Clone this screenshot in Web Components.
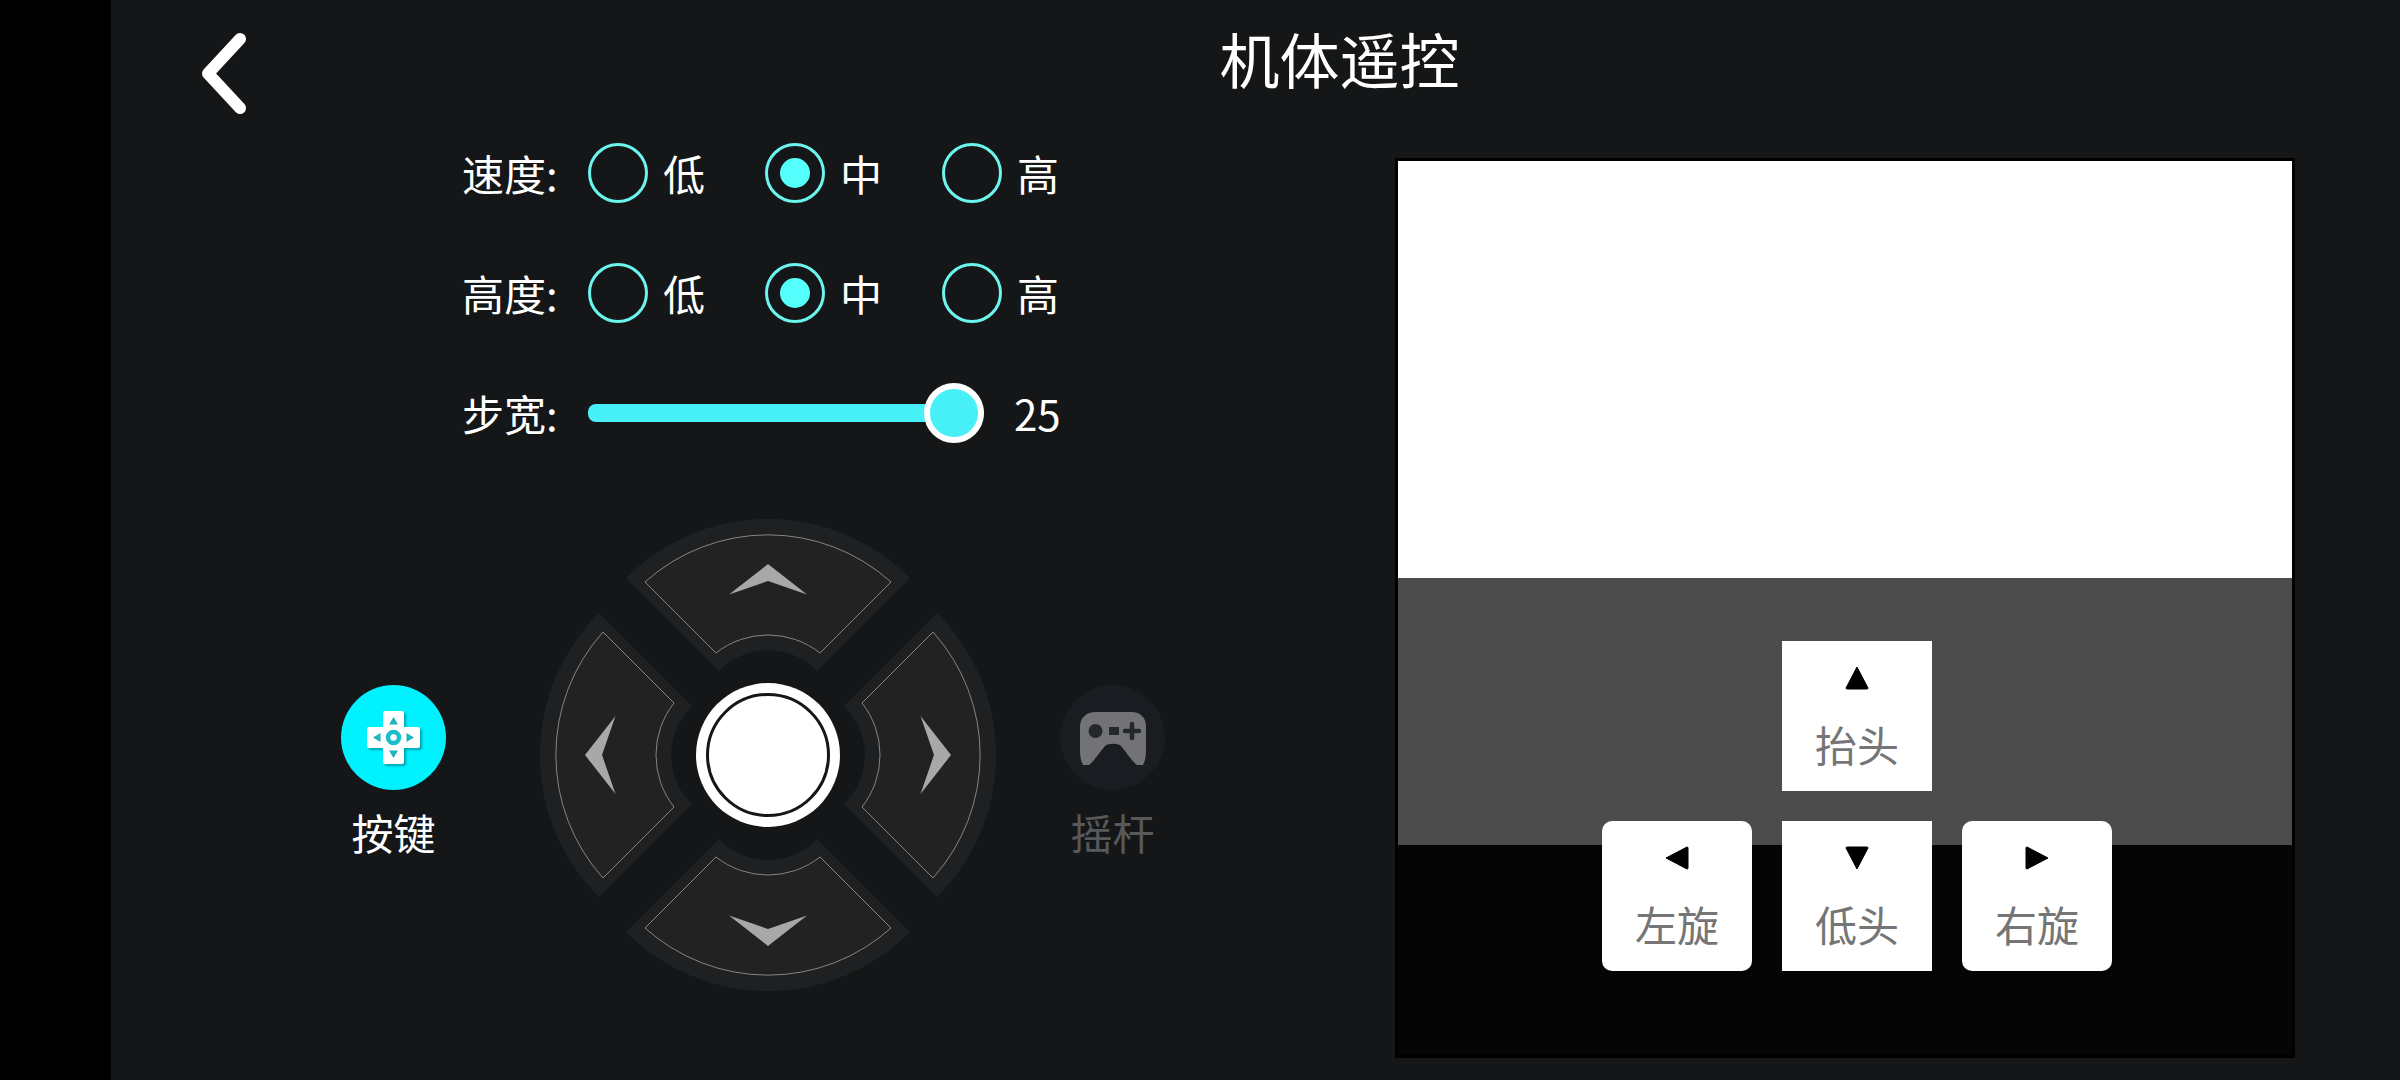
<!DOCTYPE html>
<html lang="zh-CN">
<head>
    <meta charset="UTF-8">
    <meta name="viewport" content="width=device-width, initial-scale=1.0">
    <title>机体遥控</title>
    <style>
        body {
            margin: 0;
            background: #000000;
            color: #ffffff;
            font-family: "Noto Sans CJK SC", "Noto Sans", sans-serif;
            font-size: 42px;
            line-height: 60px;
        }
    </style>
</head>
<body>
<remote-page></remote-page>

<script>
    // 根据模板创建shadow root
    function attach(host, html) {
        const template = document.createElement('template');
        template.innerHTML = html;
        const shadow = host.attachShadow({mode: 'open'});
        shadow.appendChild(template.content.cloneNode(true));
        return shadow;
    }

    const buttonReset = `
        button {
            appearance: none;
            border: 0;
            margin: 0;
            padding: 0;
            background: none;
            color: inherit;
            font: inherit;
            cursor: pointer;
        }
        svg {
            display: block;
        }
    `;

    // 顶部标题栏
    class RemoteHeader extends HTMLElement {
        constructor() {
            super();
            attach(this, `
                <style>
                    ${buttonReset}
                    :host {
                        display: flex;
                        align-items: flex-start;
                        padding: 0 0 27px 90px;
                    }
                    button {
                        width: 78px;
                        padding-top: 33px;
                    }
                    h1 {
                        flex: 1;
                        margin: 0;
                        font-size: 60px;
                        font-weight: 400;
                        line-height: 116px;
                        text-align: center;
                    }
                </style>
                <button type="button" aria-label="返回">
                    <svg width="45" height="81" viewBox="0 0 45 81">
                        <path d="M39 6 L7 40.500 L39 75" fill="none" stroke="#ffffff" stroke-width="12"
                              stroke-linecap="round" stroke-linejoin="round"/>
                    </svg>
                </button>
                <h1><slot></slot></h1>
            `);
        }
    }

    // 单选设置项
    class OptionRow extends HTMLElement {
        constructor() {
            super();
            const options = ['低', '中', '高'];
            const value = this.getAttribute('value');
            attach(this, `
                <style>
                    :host {
                        display: block;
                    }
                    .row {
                        display: flex;
                        align-items: center;
                    }
                    .name {
                        min-width: 96px;
                        margin-right: 30px;
                    }
                    .options {
                        display: flex;
                        gap: 60px;
                    }
                    label {
                        display: flex;
                        align-items: center;
                        gap: 15px;
                        cursor: pointer;
                    }
                    input {
                        appearance: none;
                        display: grid;
                        place-items: center;
                        box-sizing: border-box;
                        width: 60px;
                        height: 60px;
                        margin: 0;
                        border: 3px solid #6cf5ef;
                        border-radius: 50%;
                    }
                    input:checked::before {
                        content: '';
                        width: 30px;
                        height: 30px;
                        border-radius: 50%;
                        background: #55fffb;
                    }
                </style>
                <div class="row" role="radiogroup" aria-labelledby="name">
                    <span class="name" id="name"><slot></slot></span>
                    <div class="options">
                        ${options.map(o => `
                            <label><input type="radio" name="level" value="${o}" ${o === value ? 'checked' : ''}>${o}</label>
                        `).join('')}
                    </div>
                </div>
            `);
        }
    }

    // 滑块设置项
    class SliderRow extends HTMLElement {
        constructor() {
            super();
            const value = this.getAttribute('value');
            const name = this.getAttribute('name');
            this.shadow = attach(this, `
                <style>
                    :host {
                        display: flex;
                        align-items: center;
                        gap: 30px;
                    }
                    label {
                        min-width: 96px;
                    }
                    output {
                        min-width: 48px;
                    }
                    input {
                        appearance: none;
                        width: 396px;
                        height: 60px;
                        margin: 0;
                        background: none;
                        cursor: pointer;
                    }
                    input::-webkit-slider-runnable-track {
                        height: 18px;
                        border-radius: 8px;
                        background: linear-gradient(to right, #47eff6 var(--fill, 100%), #35393d var(--fill, 100%));
                    }
                    input::-webkit-slider-thumb {
                        appearance: none;
                        box-sizing: border-box;
                        width: 60px;
                        height: 60px;
                        margin-top: -21px;
                        border: 6px solid #ffffff;
                        border-radius: 50%;
                        background: #47eff6;
                    }
                </style>
                <label for="range">${name}</label>
                <input id="range" type="range" min="0" max="25" value="${value}">
                <output for="range">${value}</output>
            `);
        }

        connectedCallback() {
            const input = this.shadow.querySelector('input');
            input.addEventListener('input', () => {
                input.style.setProperty('--fill', input.value / input.max * 100 + '%');
                this.shadow.querySelector('output').textContent = input.value;
            });
        }
    }

    // 控制模式切换按钮
    class ModeButton extends HTMLElement {
        constructor() {
            super();
            attach(this, `
                <style>
                    ${buttonReset}
                    :host {
                        display: block;
                        padding-top: 37px;
                        --disc: #191d22;
                        --label: #58595b;
                    }
                    :host([active]) {
                        --disc: #00f2ff;
                        --label: #ffffff;
                    }
                    button {
                        display: flex;
                        flex-direction: column;
                        align-items: center;
                        gap: 12px;
                        color: var(--label);
                    }
                    .disc {
                        display: grid;
                        width: 105px;
                        height: 105px;
                        border-radius: 50%;
                        background: var(--disc);
                    }
                </style>
                <button type="button">
                    <span class="disc"><slot name="icon"></slot></span>
                    <span><slot></slot></span>
                </button>
            `);
        }
    }

    // 方向盘
    class DirectionPad extends HTMLElement {
        constructor() {
            super();
            const directions = [
                {id: 'up', name: '前进', angle: 0, box: [-142, -200, 284, 152]},
                {id: 'left', name: '左移', angle: -90, box: [-200, -142, 152, 284]},
                {id: 'right', name: '右移', angle: 90, box: [48, -142, 152, 284]},
                {id: 'down', name: '后退', angle: 180, box: [-142, 48, 284, 152]}
            ];
            attach(this, `
                <style>
                    ${buttonReset}
                    :host {
                        display: grid;
                        width: 456px;
                        height: 472px;
                    }
                    button {
                        grid-area: 1 / 1;
                        place-self: center;
                    }
                    /* 扇形的外框互相重叠，只让图形本身响应点击 */
                    .wedge {
                        pointer-events: none;
                    }
                    .wedge path {
                        pointer-events: auto;
                    }
                    .wedge:active .face {
                        fill: #303234;
                    }
                    .up {
                        align-self: start;
                    }
                    .down {
                        align-self: end;
                    }
                    .left {
                        justify-self: start;
                    }
                    .right {
                        justify-self: end;
                    }
                    .center {
                        box-sizing: border-box;
                        width: 144px;
                        height: 144px;
                        padding: 10px;
                        border-radius: 50%;
                        background: #ffffff;
                    }
                    .center span {
                        display: block;
                        box-sizing: border-box;
                        height: 100%;
                        border: 3px solid #141617;
                        border-radius: 50%;
                    }
                </style>
                ${directions.map(d => `
                    <button class="wedge ${d.id}" type="button" aria-label="${d.name}">
                        <svg width="${d.box[2]}" height="${d.box[3]}" viewBox="${d.box.join(' ')}">
                            <g transform="rotate(${d.angle})">
                                <path d="M-142 -141 A200 200 0 0 1 142 -141 L49 -48 A68 68 0 0 0 -49 -48 Z" fill="#1e2022"/>
                                <path class="face" d="M-123 -137 A184 184 0 0 1 123 -137 L52 -66 A84 84 0 0 0 -52 -66 Z"
                                      fill="#222222" stroke="#858585" stroke-width="1"/>
                                <path d="M0 -155 L39 -124.500 L0 -138 L-39 -124.500 Z" fill="#a8a8a8"/>
                            </g>
                        </svg>
                    </button>
                `).join('')}
                <button class="center" type="button" aria-label="停止"><span></span></button>
            `);
        }
    }

    // 姿态控制按钮
    class PoseButton extends HTMLElement {
        constructor() {
            super();
            const angle = {up: 0, right: 90, down: 180, left: 270}[this.getAttribute('direction')];
            attach(this, `
                <style>
                    ${buttonReset}
                    :host {
                        display: block;
                    }
                    button {
                        display: flex;
                        flex-direction: column;
                        align-items: center;
                        gap: 24px;
                        box-sizing: border-box;
                        width: 150px;
                        height: 150px;
                        padding-top: 25px;
                        background: #ffffff;
                        color: #757575;
                    }
                    :host([rounded]) button {
                        border-radius: 10px;
                    }
                </style>
                <button type="button">
                    <svg width="24" height="24" viewBox="0 0 24 24">
                        <path d="M12 1 L23 22 Q23 23 22 23 L2 23 Q1 23 1 22 Z" fill="#000000" stroke="#000000"
                              stroke-width="1" stroke-linejoin="round" transform="rotate(${angle} 12 12)"/>
                    </svg>
                    <span><slot></slot></span>
                </button>
            `);
        }
    }

    // 摄像头画面，控制按钮叠放在画面上
    class CameraView extends HTMLElement {
        constructor() {
            super();
            attach(this, `
                <style>
                    :host {
                        display: grid;
                        box-sizing: border-box;
                        aspect-ratio: 1;
                        border: 3px solid #000000;
                        background: #050505;
                    }
                    .picture, .controls {
                        grid-area: 1 / 1;
                    }
                    .picture {
                        display: grid;
                        grid-template-rows: 417fr 267fr 210fr;
                    }
                    .sky {
                        background: #ffffff;
                    }
                    .ground {
                        background: #4c4c4c;
                    }
                    .controls {
                        display: grid;
                        grid-template-columns: repeat(3, auto);
                        gap: 30px;
                        place-content: end center;
                        padding: 0 0 84px 24px;
                    }
                    slot[name="up"] {
                        display: block;
                        grid-column: 2;
                    }
                    .bottom {
                        display: flex;
                        grid-column: 1 / -1;
                        gap: 30px;
                    }
                </style>
                <div class="picture">
                    <div class="sky"></div>
                    <div class="ground"></div>
                </div>
                <div class="controls">
                    <slot name="up"></slot>
                    <div class="bottom"><slot></slot></div>
                </div>
            `);
        }
    }

    // 页面
    class RemotePage extends HTMLElement {
        constructor() {
            super();
            attach(this, `
                <style>
                    :host {
                        display: block;
                        box-sizing: border-box;
                        min-height: 100vh;
                        margin-left: 111px;
                        background: #141617;
                    }
                    main {
                        display: grid;
                        grid-template-columns: minmax(0, 107fr) minmax(0, 75fr);
                        align-items: start;
                        padding-right: 105px;
                    }
                    .panel {
                        display: flex;
                        flex-direction: column;
                        align-items: center;
                        gap: 76px;
                    }
                    .settings {
                        display: flex;
                        flex-direction: column;
                        gap: 60px;
                        padding-left: 18px;
                    }
                    .drive {
                        display: flex;
                        align-items: center;
                        gap: 64px;
                    }
                    direction-pad {
                        margin-left: 30px;
                    }
                    camera-view {
                        margin-top: 15px;
                    }
                    .keys {
                        filter: drop-shadow(2px 2px 1px rgba(0, 90, 100, 0.5));
                    }
                </style>
                <remote-header>机体遥控</remote-header>
                <main>
                    <section class="panel">
                        <div class="settings">
                            <option-row value="中">速度:</option-row>
                            <option-row value="中">高度:</option-row>
                            <slider-row name="步宽:" value="25"></slider-row>
                        </div>
                        <div class="drive">
                            <mode-button active>
                                <svg slot="icon" width="105" height="105" viewBox="0 0 105 105">
                                    <path class="keys" fill="#ffffff" d="M44 26 H61 Q63 26 63 28 V42 H77 Q79 42 79 44 V61 Q79 63 77 63 H63 V77 Q63 79 61 79 H44 Q42 79 42 77 V63 H28 Q26 63 26 61 V44 Q26 42 28 42 H42 V28 Q42 26 44 26 Z"/>
                                    <path fill="#1fb4bd" d="M52.500 32 L57 39.500 H48 Z M52.500 73 L57 65.500 H48 Z M32 52.500 L39.500 48 V57 Z M73 52.500 L65.500 48 V57 Z"/>
                                    <circle cx="52.500" cy="52.500" r="5.500" fill="#ffffff" stroke="#1bbdc8" stroke-width="4.500"/>
                                </svg>
                                按键
                            </mode-button>
                            <direction-pad></direction-pad>
                            <mode-button>
                                <svg slot="icon" width="105" height="105" viewBox="0 0 105 105">
                                    <path fill="#727277" d="M36 27 H71 C81 27 86 33 86 42 V66 C86 72 85 76 83 80 H77 C72 76 66 67 61 61 C58 58 48 58 45 61 C40 67 34 76 29 80 H23 C21 76 20 72 20 66 V42 C20 33 26 27 36 27 Z"/>
                                    <circle cx="35.500" cy="46" r="7" fill="#24272b"/>
                                    <path fill="#24272b" d="M49 42 H59 V50 H49 Z"/>
                                    <path fill="none" stroke="#24272b" stroke-width="4.500" stroke-linecap="round" d="M65 46 H79 M72 39 V53"/>
                                </svg>
                                摇杆
                            </mode-button>
                        </div>
                    </section>
                    <camera-view>
                        <pose-button slot="up" direction="up">抬头</pose-button>
                        <pose-button direction="left" rounded>左旋</pose-button>
                        <pose-button direction="down">低头</pose-button>
                        <pose-button direction="right" rounded>右旋</pose-button>
                    </camera-view>
                </main>
            `);
        }
    }

    // 注册自定义元素
    customElements.define('remote-header', RemoteHeader);
    customElements.define('option-row', OptionRow);
    customElements.define('slider-row', SliderRow);
    customElements.define('mode-button', ModeButton);
    customElements.define('direction-pad', DirectionPad);
    customElements.define('pose-button', PoseButton);
    customElements.define('camera-view', CameraView);
    customElements.define('remote-page', RemotePage);
</script>
</body>
</html>
